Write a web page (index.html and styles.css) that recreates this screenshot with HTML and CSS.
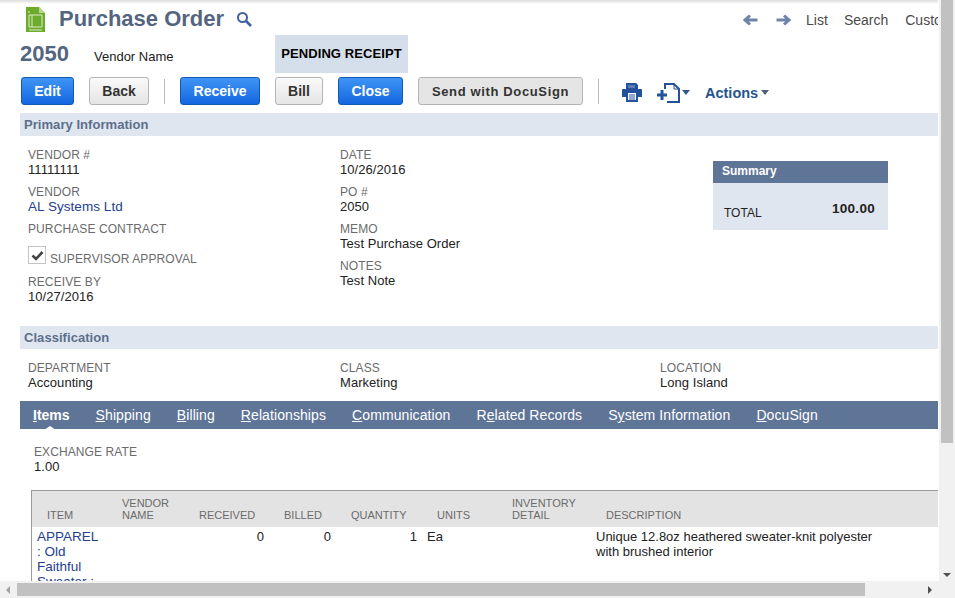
FILE: index.html
```html
<!DOCTYPE html>
<html lang="en">
<head>
<meta charset="utf-8">
<title>Purchase Order</title>
<link rel="stylesheet" href="styles.css">
</head>
<body>
<div class="window">
  <main class="viewport">
    <div class="page">
      <header class="title-row">
        <svg class="record-icon" width="21" height="27" viewBox="0 0 21 27"><path d="M1 1H14L20 7V26H1Z" fill="#6cab2c"/><path d="M14 1L20 7H14Z" fill="#b9d68f"/><path d="M4 5V7M4 9H17V21H4V9M7 9V21M4 24H17" stroke="#dcebc8" stroke-width="1" fill="none"/></svg>
        <h1 class="title">Purchase Order</h1>
        <svg class="search-icon" width="16" height="16" viewBox="0 0 16 16"><circle cx="6.5" cy="6.5" r="4.5" fill="none" stroke="#3f5fa0" stroke-width="2"/><path d="M10 10L15 15" stroke="#3f5fa0" stroke-width="2.6"/></svg>
        <nav class="record-nav">
          <svg class="nav-arrow" width="15" height="12" viewBox="0 0 15 12"><path d="M14.5 6H3M7 1.5L2 6L7 10.5" fill="none" stroke="#6f84a8" stroke-width="3"/></svg>
          <svg class="nav-arrow" width="15" height="12" viewBox="0 0 15 12"><path d="M.5 6H12M8 1.5L13 6L8 10.5" fill="none" stroke="#6f84a8" stroke-width="3"/></svg>
          <a class="nav-link">List</a>
          <a class="nav-link">Search</a>
          <a class="nav-link">Customize</a>
        </nav>
      </header>

      <div class="id-row">
        <span class="record-id">2050</span>
        <span class="vendor-name">Vendor Name</span>
        <span class="status">PENDING RECEIPT</span>
      </div>

      <div class="toolbar">
        <button class="btn primary btn-edit">Edit</button>
        <button class="btn btn-back">Back</button>
        <span class="divider"></span>
        <button class="btn primary btn-receive">Receive</button>
        <button class="btn btn-bill">Bill</button>
        <button class="btn primary btn-close">Close</button>
        <button class="btn btn-sign">Send with DocuSign</button>
        <span class="divider divider-wide"></span>
        <svg class="print-icon" width="20" height="19" viewBox="0 0 20 19"><path d="M4 0H14L16 2V6H4ZM1 6H19Q20 6 20 7V14H16V19H4V14H0V7Q0 6 1 6Z" fill="#23529b"/><path d="M6 10H14V17H6Z" fill="#fff"/><path d="M7 12H13M7 14H13M7 16H13" stroke="#23529b"/><path d="M6 2H13V5H6Z" fill="#fff" opacity=".25"/></svg>
        <svg class="add-icon" width="23" height="20" viewBox="0 0 23 20"><path d="M8 6V1H17L22 6V19H10" fill="none" stroke="#23529b" stroke-width="2"/><path d="M17 1V6H22" fill="none" stroke="#23529b"/><path d="M0 12H10M5 7V17" stroke="#23529b" stroke-width="3"/></svg>
        <span class="caret caret-add"></span>
        <span class="actions">Actions</span>
        <span class="caret caret-actions"></span>
      </div>

      <h2 class="section-bar">Primary Information</h2>
      <section class="primary-info">
        <div class="col col-one">
          <div class="field"><div class="label">Vendor #</div><div class="value">11111111</div></div>
          <div class="field"><div class="label">Vendor</div><a class="value link">AL Systems Ltd</a></div>
          <div class="field field-short"><div class="label">Purchase Contract</div></div>
          <div class="check-field">
            <span class="checkbox"><svg width="13" height="11" viewBox="0 0 13 11"><path d="M1.5 5.5L5 9L11.5 2" fill="none" stroke="#444" stroke-width="2.6"/></svg></span>
            <span class="label">Supervisor Approval</span>
          </div>
          <div class="field"><div class="label">Receive By</div><div class="value">10/27/2016</div></div>
        </div>
        <div class="col col-two">
          <div class="field"><div class="label">Date</div><div class="value">10/26/2016</div></div>
          <div class="field"><div class="label">PO #</div><div class="value">2050</div></div>
          <div class="field"><div class="label">Memo</div><div class="value">Test Purchase Order</div></div>
          <div class="field"><div class="label">Notes</div><div class="value">Test Note</div></div>
        </div>
        <aside class="summary">
          <div class="summary-head">Summary</div>
          <div class="summary-body"><span class="summary-label">TOTAL</span><span class="summary-amount">100.00</span></div>
        </aside>
      </section>

      <h2 class="section-bar">Classification</h2>
      <section class="classification">
        <div class="field class-one"><div class="label">Department</div><div class="value">Accounting</div></div>
        <div class="field class-two"><div class="label">Class</div><div class="value">Marketing</div></div>
        <div class="field"><div class="label">Location</div><div class="value">Long Island</div></div>
      </section>

      <nav class="tabs">
        <a class="tab active"><u>I</u>tems</a>
        <a class="tab"><u>S</u>hipping</a>
        <a class="tab"><u>B</u>illing</a>
        <a class="tab"><u>R</u>elationships</a>
        <a class="tab"><u>C</u>ommunication</a>
        <a class="tab">R<u>e</u>lated Records</a>
        <a class="tab">S<u>y</u>stem Information</a>
        <a class="tab"><u>D</u>ocuSign</a>
      </nav>

      <div class="field exchange"><div class="label">Exchange Rate</div><div class="value">1.00</div></div>

      <table class="items">
        <colgroup>
          <col class="c-item"><col class="c-vendor"><col class="c-received"><col class="c-billed"><col class="c-qty"><col class="c-units"><col class="c-inv"><col class="c-desc"><col>
        </colgroup>
        <thead>
          <tr>
            <th>Item</th><th>Vendor<br>Name</th><th>Received</th><th>Billed</th><th>Quantity</th><th>Units</th><th>Inventory<br>Detail</th><th>Description</th><th></th>
          </tr>
        </thead>
        <tbody>
          <tr>
            <td><a class="link">APPAREL : Old Faithful Sweater : Navy</a></td><td></td><td class="num">0</td><td class="num">0</td><td class="num">1</td><td>Ea</td><td></td><td>Unique 12.8oz heathered sweater-knit polyester with brushed interior</td><td></td>
          </tr>
        </tbody>
      </table>
    </div>
  </main>

  <div class="vscroll">
    <div class="vthumb"></div>
    <span class="arrow arrow-down"></span>
  </div>
  <div class="hscroll">
    <span class="arrow arrow-left"></span>
    <div class="hthumb"></div>
    <span class="arrow arrow-right"></span>
  </div>
  <div class="corner"></div>
</div>
</body>
</html>
```
FILE: styles.css
```css
* { box-sizing: border-box; }
html, body { margin: 0; height: 100%; overflow: hidden; }
body { font-family: "Liberation Sans", Arial, sans-serif; background: #fff; color: #222; }

.window {
  width: 955px; height: 598px;
  display: grid;
  grid-template-columns: 938px 17px;
  grid-template-rows: 581px 17px;
}
.viewport { position: relative; overflow: hidden; background: #fff; }
.viewport::before {
  content: ""; position: absolute; left: 0; right: 0; top: 0; height: 4px;
  background: linear-gradient(#dcdcdc, #fff); z-index: 1;
}
.page { width: 1040px; padding-left: 20px; }

/* header */
.title-row { display: flex; align-items: flex-start; height: 35px; padding: 6px 0 0 5px; }
.record-icon { flex: none; }
.title { margin: 0 0 0 13px; font-size: 22px; line-height: 26px; font-weight: bold; color: #54657f; }
.search-icon { margin: 5px 0 0 12px; }
.record-nav { display: flex; align-items: center; height: 27px; margin-left: 491px; font-size: 14px; color: #4a4a4a; }
.nav-arrow { margin-right: 18px; }
.nav-arrow + .nav-link { margin-left: -3px; }
.nav-link { margin-right: 16px; white-space: nowrap; }
.nav-link + .nav-link + .nav-link { margin-left: 1px; }

.id-row { display: flex; height: 38px; align-items: center; }
.record-id { width: 74px; font-size: 22px; font-weight: bold; color: #54657f; }
.vendor-name { width: 181px; font-size: 13px; color: #1a1a1a; margin-top: 5px; }
.status {
  width: 133px; height: 38px; line-height: 38px; text-align: center;
  background: #d5dfeb; color: #000; font-size: 13px; font-weight: bold; letter-spacing: .1px;
}

/* toolbar */
.toolbar { display: flex; align-items: center; height: 28px; margin: 4px 0 8px 1px; }
.btn {
  height: 28px; padding: 0; border-radius: 3px; font: bold 14px "Liberation Sans", Arial, sans-serif;
  border: 1px solid #b5b5b5; color: #333; background: linear-gradient(#fafafa, #e5e5e5);
}
.btn.primary { border-color: #125ab2; color: #fff; background: linear-gradient(#3f94f5, #1467e0); }
.btn-edit { width: 53px; margin-right: 15px; }
.btn-back { width: 60px; }
.divider { width: 1px; height: 25px; background: #bbb; margin: 0 15px; }
.btn-receive { width: 80px; margin-right: 15px; }
.btn-bill { width: 48px; margin-right: 15px; }
.btn-close { width: 65px; margin-right: 15px; }
.btn-sign { width: 165px; background: #e5e5e5; font-size: 13px; letter-spacing: .64px; }
.divider-wide { margin: 0 23px 0 15px; }
.print-icon { margin-top: 2px; }
.add-icon { margin: 3px 0 0 15px; }
.caret { width: 0; height: 0; border-left: 4px solid transparent; border-right: 4px solid transparent; border-top: 5px solid #33568f; margin-top: 3px; }
.caret-add { margin-left: 2px; }
.actions { margin: 3px 3px 0 15px; font-size: 14.5px; font-weight: bold; color: #26548f; }
.caret-actions { border-top-color: #4d6079; }

/* sections */
.section-bar {
  margin: 0; height: 23px; line-height: 23px; padding-left: 4px;
  background: #e0e6f0; color: #5c6f8b; font-size: 13px; font-weight: bold; letter-spacing: .05px;
}
.label { font-size: 12px; line-height: 14px; color: #6b6b6b; text-transform: uppercase; white-space: nowrap; letter-spacing: .1px; }
.value { display: block; font-size: 13px; line-height: 15px; color: #222; letter-spacing: .05px; }
.link { color: #24408e; font-size: 13.5px; }
.field { height: 37px; }
.field-short { height: 24px; }

.primary-info { display: flex; height: 190px; padding: 12px 0 0 8px; }
.col-one { width: 312px; }
.col-two { width: 373px; }
.check-field { display: flex; align-items: flex-end; height: 18px; margin-bottom: 11px; }
.checkbox {
  width: 18px; height: 18px; border: 1px solid #c4c4c4; margin-right: 4px;
  display: flex; align-items: center; justify-content: center;
}
.check-field .label { line-height: 14px; margin-bottom: -2px; }

.summary { width: 175px; height: 69px; margin-top: 13px; background: #e0e6f0; }
.summary-head { height: 22px; line-height: 21px; padding-left: 9px; background: #5f7597; color: #fff; font-size: 12px; font-weight: bold; }
.summary-body { display: flex; justify-content: space-between; align-items: flex-start; padding: 18px 13px 0 11px; }
.summary-label { font-size: 12px; line-height: 15px; margin-top: 5px; color: #222; }
.summary-amount { font-size: 13.5px; line-height: 16px; font-weight: bold; letter-spacing: .3px; color: #222; }

.classification { display: flex; height: 52px; padding: 12px 0 0 8px; }
.class-one { width: 312px; }
.class-two { width: 320px; }

/* tabs */
.tabs {
  display: flex; width: 918px; height: 28px; padding-left: 13px; gap: 26px;
  align-items: center; background: #5f7597; overflow: hidden;
}
.tab { position: relative; color: #fff; font-size: 14px; white-space: nowrap; letter-spacing: .09px; }
.tab.active { font-weight: bold; letter-spacing: 0; }
.tab.active::after {
  content: ""; position: absolute; left: 11px; bottom: -7px;
  border-left: 6px solid transparent; border-right: 6px solid transparent; border-bottom: 4px solid #fff;
}

.exchange { height: 61px; padding: 16px 0 0 14px; }

/* table */
.items {
  table-layout: fixed; width: 1000px; margin-left: 11px; border-collapse: separate; border-spacing: 0;
  border-top: 1px solid #999; border-left: 1px solid #999;
}
.c-item { width: 75px; } .c-vendor { width: 77px; } .c-received { width: 85px; } .c-billed { width: 67px; }
.c-qty { width: 86px; } .c-units { width: 75px; } .c-inv { width: 94px; } .c-desc { width: 290px; }
.items th {
  height: 36px; padding: 0 0 6px 15px; background: #e3e3e3; color: #6b6b6b;
  font-size: 11px; line-height: 12px; font-weight: normal; text-align: left; vertical-align: bottom;
  text-transform: uppercase; white-space: nowrap;
}
.items td { padding: 2px 5px; font-size: 13px; line-height: 15px; vertical-align: top; color: #222; }
.items td.num { text-align: right; }

/* scrollbars */
.vscroll { position: relative; background: #f1f1f1; padding: 0 2px; border-left: 1px solid #fff; }
.vthumb { height: 443px; background: #c1c1c1; }
.hscroll { position: relative; background: #f1f1f1; padding: 2px 0 2px 17px; }
.hthumb { width: 848px; height: 13px; background: #c1c1c1; }
.corner { background: #f1f1f1; }
.arrow { position: absolute; width: 0; height: 0; }
.arrow-down { right: 4px; bottom: 4px; border-left: 4px solid transparent; border-right: 4px solid transparent; border-top: 4px solid #505050; }
.arrow-left { left: 6px; top: 5px; border-top: 4px solid transparent; border-bottom: 4px solid transparent; border-right: 4px solid #a3a3a3; }
.arrow-right { right: 6px; top: 5px; border-top: 4px solid transparent; border-bottom: 4px solid transparent; border-left: 4px solid #505050; }
```
